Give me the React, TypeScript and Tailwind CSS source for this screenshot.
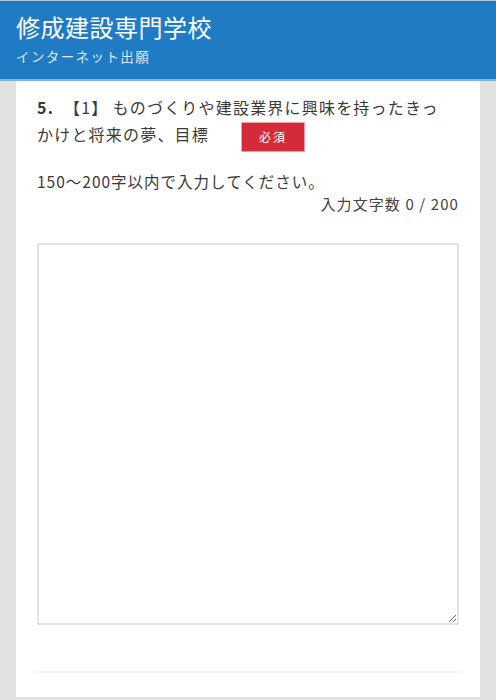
import React from "react";

const font = { fontFamily: '"Noto Sans CJK JP", "Noto Sans", sans-serif' };

export default function App() {
  return (
    <div className="w-[496px] h-[700px] bg-[#e2e2e0] flex flex-col overflow-hidden" style={font}>
      <header className="h-[81px] shrink-0 bg-[#1f7cc4] border-t border-[#b4c6d6] border-b-2 border-b-[#7db3dd] px-4 pt-[11px] text-white">
        <h1 className="text-[24px] leading-[30px] tracking-[0.5px]">修成建設専門学校</h1>
        <p className="text-[13.5px] leading-[18px] mt-[5px] tracking-[1.4px] text-[#dbe9f5]">インターネット出願</p>
      </header>

      <main className="mx-4 flex-1 bg-white px-[21px] pt-[13px] pb-[24px] mb-1">
        <div className="text-[16px] leading-[27px] tracking-[1.2px] text-[#3a3a3a] whitespace-nowrap">
          <span className="font-bold">5.</span>
          <span className="ml-[10px] mr-[4px]">【1】</span>ものづくりや建設業界に興味を持ったきっ
          <br />
          かけと将来の夢、目標
          <span className="inline-block align-middle ml-[32px] w-[64px] h-[30px] bg-[#d42a3a] border border-[#f0a0a8] text-white text-[12px] leading-[28px] text-center tracking-[2px]">
            必須
          </span>
        </div>

        <p className="mt-[17px] text-[15.5px] leading-[24px] tracking-[1px] text-[#3a3a3a]">
          150〜200字以内で入力してください。
        </p>
        <p className="text-right text-[15px] leading-[22px] tracking-[1.1px] text-[#444]">入力文字数 0 / 200</p>

        <textarea
          className="block mt-[28px] w-full h-[382px] border-2 border-[#e4e4e4] bg-white resize-y outline-none"
          defaultValue=""
        />

        <div className="mt-[46px] border-t-2 border-dotted border-[#e6e6e6]" />
      </main>
    </div>
  );
}
